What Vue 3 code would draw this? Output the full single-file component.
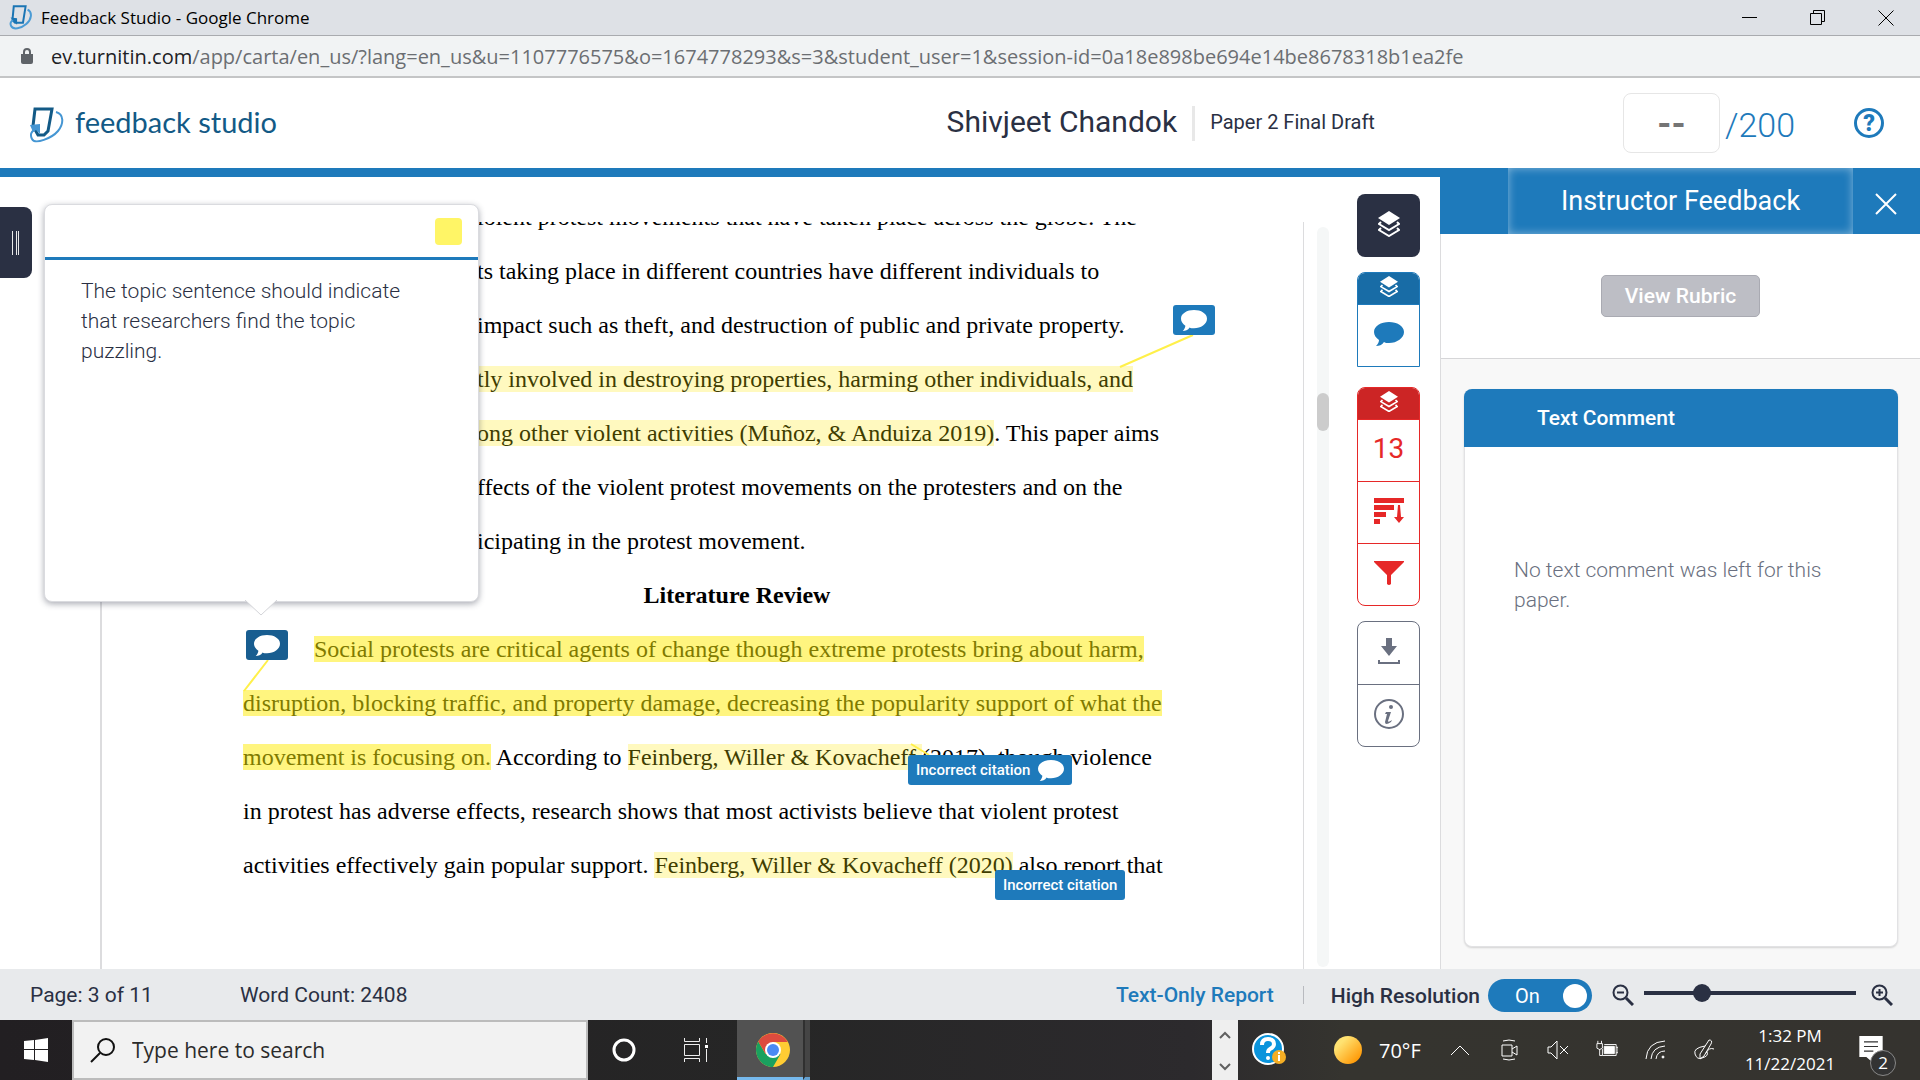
<script setup>
import { ref } from 'vue'

const zoom = ref(25)
const highRes = ref(true)

// Each line is a list of runs; tone selects the highlight strength.
const lines = [
  { tucked: true, runs: [{ t: 'iolent protest movements that have taken place across the globe. The' }] },
  { tucked: true, runs: [{ t: 'ts taking place in different countries have different individuals to' }] },
  { tucked: true, runs: [{ t: 'impact such as theft, and destruction of public and private property.' }] },
  { tucked: true, runs: [{ t: 'tly involved in destroying properties, harming other individuals, and', tone: 'soft' }] },
  { tucked: true, runs: [{ t: 'ong other violent activities (Muñoz, & Anduiza 2019)', tone: 'soft' }, { t: '. This paper aims' }] },
  { tucked: true, runs: [{ t: 'ffects of the violent protest movements on the protesters and on the' }] },
  { tucked: true, runs: [{ t: 'icipating in the protest movement.' }] },
  { heading: true, runs: [{ t: 'Literature Review' }] },
  { indent: true, runs: [{ t: 'Social protests are critical agents of change though extreme protests bring about harm,', tone: 'strong' }] },
  { runs: [{ t: 'disruption, blocking traffic, and property damage, decreasing the popularity support of what the', tone: 'strong' }] },
  { runs: [{ t: 'movement is focusing on.', tone: 'strong' }, { t: ' According to ' }, { t: 'Feinberg, Willer & Kovacheff ', tone: 'soft' }, { t: '(2017), though violence' }] },
  { runs: [{ t: 'in protest has adverse effects, research shows that most activists believe that violent protest' }] },
  { runs: [{ t: 'activities effectively gain popular support. ' }, { t: 'Feinberg, Willer & Kovacheff (2020)', tone: 'soft' }, { t: ' also report that' }] },
]
</script>

<template>
  <div class="screen">
    <div class="titlebar">
      <svg class="tab-logo" viewBox="0 0 34 38" aria-hidden="true">
        <path d="M6 2h18l-4 25H8L4 23z" fill="none" stroke="#1b75b4" stroke-width="3" />
        <path d="M27 7c8 4 6 15-2 22S5 38 2 32s2-9 7-11" fill="none" stroke="#4a9bd5" stroke-width="3" />
        <path d="M1 19l10 1v10z" fill="#1b75b4" />
      </svg>
      <span class="window-title">Feedback Studio - Google Chrome</span>
      <div class="window-buttons">
        <button aria-label="Minimize"><svg viewBox="0 0 16 16"><path d="M0 7.500h15" /></svg></button>
        <button aria-label="Restore"><svg viewBox="0 0 16 16"><path d="M.5 3.500h11v11H.5zM3.500 3V.5h11v11H12" /></svg></button>
        <button aria-label="Close window"><svg viewBox="0 0 16 16"><path d="M.5.5l15 15M15.500.5l-15 15" /></svg></button>
      </div>
    </div>

    <div class="urlbar">
      <svg class="lock" viewBox="0 0 12 16" aria-hidden="true">
        <path d="M0 6h12v8a2 2 0 0 1-2 2H2a2 2 0 0 1-2-2z" fill="#5f6368" />
        <path d="M3 7V4a3 3 0 0 1 6 0v3" fill="none" stroke="#5f6368" stroke-width="2" />
      </svg>
      <span class="url"><b>ev.turnitin.com</b>/app/carta/en_us/?lang=en_us&amp;u=1107776575&amp;o=1674778293&amp;s=3&amp;student_user=1&amp;session-id=0a18e898be694e14be8678318b1ea2fe</span>
    </div>

    <header class="header">
      <div class="brand">
        <svg viewBox="0 0 34 38" aria-hidden="true">
          <path d="M5 3h17l-4 22-4 4H8l-5-9z" fill="none" stroke="#135a86" stroke-width="3" />
          <path d="M26 6c8 2 8 12 2 19S5 39 2 33s1-8 4-11" fill="none" stroke="#4596d3" stroke-width="2" />
          <path d="M0 19l10-1v10L6 24l-3 2z" fill="#4596d3" />
        </svg>
        <span>feedback studio</span>
      </div>
      <div class="paper-info">
        <h1>Shivjeet Chandok</h1>
        <span class="paper-title">Paper 2 Final Draft</span>
      </div>
      <div class="grade">
        <input aria-label="Grade" type="text" placeholder="--" />
        <span>/200</span>
      </div>
      <button class="help" aria-label="Help">?</button>
    </header>

    <main class="main">
      <section class="viewer">
        <button class="drawer-toggle" aria-label="Open page list">
          <svg viewBox="0 0 8 24"><path d="M.5 0v24M4.500 0v24M6.500 0v24" stroke="#e8e8e8" /></svg>
        </button>
        <div class="page">
          <article class="text">
            <p
              v-for="(line, i) in lines"
              :key="i"
              :class="{ tucked: line.tucked, heading: line.heading, indent: line.indent }"
            ><template v-for="(run, j) in line.runs" :key="j"><mark v-if="run.tone" :class="run.tone">{{ run.t }}</mark><template v-else>{{ run.t }}</template></template></p>
          </article>
          <svg class="connectors" viewBox="0 0 1202 747" aria-hidden="true">
            <path d="M1091 113L1018 145M166 438L142 469M809 522L827 533" />
          </svg>
          <button class="marker m1" aria-label="Comment"><svg viewBox="0 0 30 24"><use href="#bubble" /></svg></button>
          <button class="marker m2" aria-label="Open comment"><svg viewBox="0 0 30 24"><use href="#bubble" /></svg></button>
          <button class="marker m3">Incorrect citation<svg viewBox="0 0 30 24"><use href="#bubble" /></svg></button>
          <button class="marker m4">Incorrect citation</button>
        </div>
        <div class="scrollbar"><div class="thumb"></div></div>
        <aside class="popover">
          <div class="popover-head"><button class="swatch" aria-label="Highlight colour"></button></div>
          <p>The topic sentence should indicate that researchers find the topic puzzling.</p>
          <svg class="arrow" viewBox="0 0 32 16"><path d="M0 0L16 15L32 0" fill="#fff" stroke="#d3d4d8" /></svg>
        </aside>
      </section>

      <nav class="tools">
        <button class="all" aria-label="All layers"><svg viewBox="0 0 22 26"><use href="#layers" /></svg></button>
        <div class="group blue">
          <button class="cap" aria-label="Instructor layer"><svg viewBox="0 0 22 26"><use href="#layers" /></svg></button>
          <button aria-label="Instructor feedback"><svg class="wide" viewBox="0 0 30 24"><use href="#bubble" /></svg></button>
        </div>
        <div class="group red">
          <button class="cap" aria-label="Similarity layer"><svg viewBox="0 0 22 26"><use href="#layers" /></svg></button>
          <button class="score">13</button>
          <button aria-label="All sources">
            <svg class="wide" viewBox="0 0 30 26"><path fill="currentColor" d="M0 0h30v5H0zM0 7h20v5H0zM0 14h12v5H0zM0 21h6v5H0zM24 7h2l1 12h3l-5 6-5-6h3z" /></svg>
          </button>
          <button aria-label="Filters">
            <svg class="wide" viewBox="0 0 30 24"><path fill="currentColor" d="M0 0h30v1L17 14v9q-2 2-4 0v-9L0 1z" /></svg>
          </button>
        </div>
        <div class="group gray">
          <button aria-label="Download">
            <svg class="wide" viewBox="0 0 30 26"><path fill="currentColor" d="M12 0h6v8h5l-8 10-8-10h5z" /><path d="M5 22v3h20v-3" fill="none" stroke="currentColor" stroke-width="2" /></svg>
          </button>
          <button aria-label="Submission information">
            <svg class="wide" viewBox="0 0 30 30"><circle cx="15" cy="15" r="14" fill="none" stroke="currentColor" stroke-width="2" /><circle cx="17" cy="8" r="2" fill="currentColor" /><path d="M12 13h5l-3 9q0 2 4-1l-1 2q-6 4-6 0l2-8h-2z" fill="currentColor" /></svg>
          </button>
        </div>
      </nav>

      <aside class="panel">
        <div class="panel-head">
          <h2>Instructor Feedback</h2>
          <button aria-label="Close panel"><svg viewBox="0 0 22 22"><path d="M1 1l20 20M21 1L1 21" stroke="#fff" stroke-width="2" /></svg></button>
        </div>
        <div class="rubric"><button>View Rubric</button></div>
        <div class="panel-body">
          <section class="card">
            <h3>Text Comment</h3>
            <p>No text comment was left for this paper.</p>
          </section>
        </div>
      </aside>
    </main>

    <footer class="footer">
      <span class="page-no">Page: 3 of 11</span>
      <span class="words">Word Count: 2408</span>
      <a href="#report">Text-Only Report</a>
      <span class="rule"></span>
      <label class="resolution">High Resolution<input v-model="highRes" type="checkbox" /><span class="switch">On</span></label>
      <button aria-label="Zoom out"><svg viewBox="0 0 22 22"><use href="#lens" /><path d="M5 8.500h7" /></svg></button>
      <input v-model="zoom" class="zoom" type="range" min="0" max="100" aria-label="Zoom" />
      <button aria-label="Zoom in"><svg viewBox="0 0 22 22"><use href="#lens" /><path d="M5 8.500h7M8.500 5v7" /></svg></button>
    </footer>

    <div class="taskbar">
      <button class="start" aria-label="Start">
        <svg viewBox="0 0 24 24"><path fill="#fff" d="M0 3l10-1v9H0zM11 2l13-2v11H11zM0 12h10v10L0 21zM11 12h13v12l-13-2z" /></svg>
      </button>
      <label class="search">
        <svg viewBox="0 0 25 25"><circle cx="16" cy="9" r="8" /><path d="M10 15L1 24" /></svg>
        <input type="text" placeholder="Type here to search" aria-label="Search" />
      </label>
      <button class="task" aria-label="Cortana"><svg viewBox="0 0 24 24"><circle cx="12" cy="12" r="10" fill="none" stroke="#fff" stroke-width="3" /></svg></button>
      <button class="task" aria-label="Task view">
        <svg viewBox="0 0 24 24" fill="none" stroke="#eee"><path d="M.5 0v3.500h15V0M.5 6.500h15v11H.5zM.5 24v-3.500h15V24M22.500 0v5M22.500 11v13" /><path d="M21 7h3v3h-3z" fill="#fff" stroke="none" /></svg>
      </button>
      <button class="task active" aria-label="Google Chrome">
        <svg class="chrome" viewBox="0 0 34 34">
          <circle cx="17" cy="17" r="17" fill="#fc3" />
          <path d="M2.300 8.500A17 17 0 0 0 17 34l7.400-12.700L17 17 9.600 21z" fill="#1aa15f" />
          <path d="M2.300 8.500A17 17 0 0 1 31.700 9H17L9.600 21z" fill="#dd4b3e" />
          <circle cx="17" cy="17" r="8" fill="#fff" />
          <circle cx="17" cy="17" r="6" fill="#4a8af4" />
        </svg>
      </button>
      <span class="stack"></span>
      <div class="spinner">
        <button aria-label="Scroll up"><svg viewBox="0 0 12 8"><path d="M1 7l5-5 5 5" /></svg></button>
        <button aria-label="Scroll down"><svg viewBox="0 0 12 8"><path d="M1 1l5 5 5-5" /></svg></button>
      </div>
      <div class="tray">
        <svg class="assist" viewBox="0 0 34 34">
          <circle cx="16" cy="16" r="15" fill="#0a94dc" stroke="#fff" stroke-width="2" />
          <path d="M10 12q0-6 6-6t6 5q0 3-4 5-2 1-2 4" fill="none" stroke="#fff" stroke-width="4" />
          <circle cx="16" cy="25" r="2" fill="#fff" />
          <circle cx="27" cy="24" r="7" fill="#f5ae24" /><path d="M26 22h2v6h-2zM26 19h2v2h-2z" fill="#fff" />
        </svg>
        <span class="sun"></span>
        <span class="temp">70°F</span>
        <svg class="glyph" viewBox="0 0 22 22"><path d="M2 16l9-9 9 9" /></svg>
        <svg class="glyph" viewBox="0 0 22 22"><path d="M4 6h10v11H4zM14 10l5-3v9l-5-3M5 2q6-2 12 0M5 20q6 2 12 0" /></svg>
        <svg class="glyph" viewBox="0 0 22 22"><path d="M1 8h3l6-6v18l-6-6H1zM13 7l8 8M21 7l-8 8" /></svg>
        <svg class="glyph" viewBox="0 0 24 22"><path d="M1 4h6v5q-3 3-6 0zM2 1v3M6 1v3M4 10v7h3M9 5h13v12H7v-7M22 8h2v6h-2" /><path d="M9 7h11v8H9z" fill="#fff" /></svg>
        <svg class="glyph" viewBox="0 0 22 22"><path d="M1 20Q2 3 20 2M6 20Q7 8 20 7M11 20q1-8 9-8" /><circle cx="18" cy="18" r="1" fill="#fff" /></svg>
        <svg class="glyph" viewBox="0 0 22 22"><path d="M15 1q4 0 2 4L10 17l-4 3 0-5zM11 7Q-1 9 1 15t7 4q7-2 5-6M12 14q3-6 8-4" /></svg>
        <div class="clock"><span>1:32 PM</span><span>11/22/2021</span></div>
        <div class="notice">
          <svg viewBox="0 0 20 24"><path d="M0 0h20v18h-7v6l-7-6H0z" fill="#fff" /><path d="M4 5h12M4 9h12M4 13h8" stroke="#333" /></svg>
          <span>2</span>
        </div>
      </div>
    </div>

    <svg class="defs" aria-hidden="true">
      <defs>
        <g id="bubble"><path fill="currentColor" d="M15 0c8 0 15 4 15 10s-7 11-15 11c-2 0-4 0-5-1-2 3-5 4-8 4 2-2 3-4 3-6-3-2-5-5-5-8C0 4 7 0 15 0z" /></g>
        <g id="layers"><path fill="currentColor" d="M11 0l11 7-11 7L0 7z" /><path fill="none" stroke="currentColor" stroke-width="2" d="M3 11l-2 2 10 6 10-6-2-2M3 17l-2 2 10 6 10-6-2-2" /></g>
        <g id="lens"><circle cx="8.500" cy="8.500" r="7" /><path d="M14 14l7 7" stroke-width="3" /></g>
      </defs>
    </svg>
  </div>
</template>

<style>
body {
  margin: 0;
}
</style>

<style scoped>
.screen {
  display: flex;
  flex-direction: column;
  min-height: 100vh;
  overflow: hidden;
  background: #fff;
  color: #2a3043;
  font-family: Roboto, "Liberation Sans", sans-serif;
  font-size: 21px;
}
.screen * {
  box-sizing: border-box;
}
button {
  display: flex;
  align-items: center;
  justify-content: center;
  padding: 0;
  border: 0;
  background: none;
  color: inherit;
  font: inherit;
}
h1, h2, h3, p {
  margin: 0;
  font-weight: 400;
}
.defs {
  position: absolute;
  width: 0;
  height: 0;
}

.titlebar {
  display: flex;
  align-items: center;
  height: 36px;
  padding-left: 9px;
  border-bottom: 1px solid #a9abaf;
  background: #dee1e6;
  color: #000;
  font-family: "Open Sans", "Noto Sans", sans-serif;
  font-size: 17px;
}
.tab-logo {
  width: 24px;
  height: 25px;
  margin-right: 8px;
}
.window-buttons {
  display: flex;
  margin-left: auto;
}
.window-buttons button {
  width: 68px;
  height: 32px;
}
.window-buttons svg {
  width: 16px;
  height: 16px;
  fill: none;
  stroke: #000;
}
.urlbar {
  display: flex;
  align-items: center;
  gap: 18px;
  height: 42px;
  padding-left: 21px;
  border-bottom: 2px solid #c4c5c6;
  background: #f1f3f4;
  color: #6b6e72;
  font-family: "Open Sans", "Noto Sans", sans-serif;
  font-size: 20px;
  white-space: nowrap;
}
.urlbar b {
  color: #202124;
  font-weight: 400;
}
.lock {
  width: 12px;
  height: 16px;
}

.header {
  display: flex;
  align-items: center;
  height: 99px;
  padding: 0 36px 0 30px;
  border-bottom: 9px solid #1e7abb;
}
.brand {
  display: flex;
  align-items: center;
  gap: 11px;
  color: #135a86;
  font-family: Lato, sans-serif;
  font-size: 29px;
}
.brand span {
  padding-bottom: 4px;
}
.brand svg {
  width: 34px;
  height: 38px;
  margin-top: 4px;
}
.paper-info {
  display: flex;
  flex: 1;
  align-items: center;
  justify-content: flex-end;
}
.paper-info h1 {
  padding: 0 15px 4px 0;
  border-right: 3px solid #e8e8e8;
  font-size: 30px;
  line-height: 31px;
}
.paper-title {
  padding: 0 0 2px 15px;
  font-size: 20px;
}
.grade {
  display: flex;
  align-items: center;
  gap: 5px;
  margin-left: 248px;
  color: #1e7abb;
  font-size: 34px;
  font-weight: 300;
}
.grade span {
  padding-top: 4px;
}
.grade input {
  width: 97px;
  height: 60px;
  padding: 2px 0 0;
  border: 1px solid #e6e6e6;
  border-radius: 8px;
  font: 700 36px Roboto, sans-serif;
  text-align: center;
}
.grade input::placeholder {
  color: #757575;
}
.help {
  width: 30px;
  height: 30px;
  margin-left: 59px;
  border: 3px solid #1e7abb;
  border-radius: 50%;
  color: #1e7abb;
  font-size: 23px;
  font-weight: 900;
}

.main {
  display: flex;
  flex: 1;
}
.viewer {
  position: relative;
  display: flex;
  flex: 1;
  padding: 45px 0 0 100px;
}
.drawer-toggle {
  position: absolute;
  top: 30px;
  left: 0;
  width: 32px;
  height: 71px;
  border-radius: 0 8px 8px 0;
  background: #2a3043;
}
.drawer-toggle svg {
  width: 8px;
  height: 24px;
}
.page {
  position: relative;
  flex: 1;
  overflow: hidden;
  border: solid #dcdcde;
  border-width: 0 1px 0 2px;
}
.text {
  margin-top: -32px;
  padding: 0 72px 0 141px;
  color: #000;
  font-family: "Liberation Serif", serif;
  font-size: 24px;
  line-height: 54px;
  white-space: pre;
}
.tucked {
  padding-left: 234px;
}
.indent {
  padding-left: 71px;
}
.heading {
  font-weight: 700;
  text-align: center;
}
mark.soft {
  background: #fff9bf;
  color: #403d00;
}
mark.strong {
  background: #fff57f;
  color: #807a00;
}
.connectors {
  position: absolute;
  top: 0;
  left: 0;
  width: 1202px;
  height: 747px;
  fill: none;
  stroke: #fff04a;
  stroke-width: 2;
}
.marker {
  position: absolute;
  gap: 8px;
  height: 30px;
  padding: 0 8px;
  border-radius: 3px;
  background: #1e7abb;
  color: #fff;
  font-size: 15px;
  font-weight: 500;
}
.marker svg {
  width: 26px;
  height: 21px;
}
.m1 {
  top: 83px;
  left: 1071px;
}
.m2 {
  top: 408px;
  left: 144px;
  background: #185d90;
}
.m3 {
  top: 533px;
  left: 806px;
}
.m4 {
  top: 648px;
  left: 893px;
}
.scrollbar {
  width: 12px;
  margin: 5px 28px 2px 13px;
  padding-top: 166px;
  border-radius: 6px;
  background: #f5f7f7;
}
.thumb {
  height: 38px;
  border-radius: 6px;
  background: #ccc;
}
.popover {
  position: absolute;
  top: 27px;
  left: 44px;
  width: 435px;
  height: 398px;
  border: 1px solid #dadbdf;
  border-radius: 8px;
  background: #fff;
  box-shadow: 0 2px 6px rgba(42, 48, 67, 0.4);
}
.popover-head {
  display: flex;
  align-items: center;
  justify-content: flex-end;
  height: 55px;
  padding: 0 16px;
  border-bottom: 3px solid #1e7abb;
}
.swatch {
  width: 27px;
  height: 27px;
  border-radius: 4px;
  background: #fff566;
}
.popover p {
  padding: 16px 60px 0 36px;
  font-weight: 300;
  line-height: 30px;
}
.arrow {
  position: absolute;
  top: 395px;
  left: 200px;
  width: 32px;
  height: 16px;
}

.tools {
  display: flex;
  flex-direction: column;
  width: 83px;
  padding-top: 17px;
}
.tools button {
  width: 63px;
  height: 62px;
  padding-bottom: 4px;
}
.tools svg {
  width: 22px;
}
.tools .wide {
  width: 30px;
}
.tools .all {
  height: 63px;
  border-radius: 8px;
  background: #2a3043;
  color: #fff;
}
.group {
  width: 63px;
  overflow: hidden;
  border: 1px solid;
  border-radius: 8px;
}
.group button {
  width: 61px;
}
.tools .cap {
  height: 31px;
  color: #fff;
}
.tools .cap svg {
  width: 18px;
}
.group button + button {
  border-top: 1px solid;
}
.blue {
  margin: 15px 0 20px;
  border-radius: 8px 8px 0 0;
  color: #1e7abb;
}
.blue .cap {
  background: #186ca6;
}
.red {
  margin-bottom: 15px;
  color: #e62828;
}
.red .cap {
  background: #cc2525;
}
.tools .score {
  font-size: 28px;
}
.gray {
  color: #6a7080;
}

.panel {
  display: flex;
  flex-direction: column;
  width: 480px;
  margin-top: -9px;
  border-left: 1px solid #dcdcde;
}
.panel-head {
  display: flex;
  height: 66px;
  margin-left: -1px;
  padding-left: 68px;
  background: #1e7abb;
  color: #fff;
}
.panel-head h2 {
  flex: 1;
  box-shadow: inset 0 0 10px rgba(255, 255, 255, 0.45);
  font-size: 27px;
  line-height: 66px;
  text-align: center;
}
.panel-head button {
  width: 67px;
  padding: 6px 2px 0 0;
}
.panel-head svg {
  width: 22px;
  height: 22px;
}
.rubric {
  display: flex;
  justify-content: center;
  align-items: center;
  height: 125px;
  border-bottom: 1px solid #d6d6d8;
}
.rubric button {
  width: 159px;
  height: 42px;
  border: 1px solid #a9aab2;
  border-radius: 5px;
  background: #bdbec5;
  color: #fff;
  font-weight: 500;
}
.panel-body {
  display: flex;
  flex: 1;
  padding: 30px 22px 22px 23px;
  background: #f8f8f8;
}
.card {
  flex: 1;
  border: 1px solid #e2e2e4;
  border-top: 0;
  border-radius: 8px;
  background: #fff;
  box-shadow: 0 1px 2px rgba(0, 0, 0, 0.15);
}
.card h3 {
  margin: 0 -1px;
  padding-left: 73px;
  border-radius: 8px 8px 0 0;
  background: #1e7abb;
  color: #fff;
  font-size: 21px;
  font-weight: 500;
  line-height: 58px;
}
.card p {
  padding: 108px 60px 0 49px;
  color: #6a7080;
  font-weight: 300;
  line-height: 30px;
}

.footer {
  display: flex;
  align-items: center;
  height: 51px;
  padding: 0 27px 0 30px;
  background: #e8eaec;
}
.page-no {
  width: 210px;
}
.footer a {
  margin-left: auto;
  color: #1e7abb;
  font-weight: 500;
  text-decoration: none;
}
.rule {
  width: 1px;
  height: 18px;
  margin: 0 27px 0 29px;
  background: #b8babf;
}
.resolution {
  display: flex;
  align-items: center;
  margin: 2px 20px 0 0;
  font-weight: 500;
}
.resolution input {
  position: absolute;
  opacity: 0;
}
.switch {
  display: flex;
  align-items: center;
  justify-content: space-between;
  width: 104px;
  height: 33px;
  margin-left: 8px;
  padding: 0 5px 0 27px;
  border-radius: 17px;
  background: #1e7abb;
  color: #fff;
  font-size: 20px;
  font-weight: 400;
}
.switch::after {
  width: 24px;
  height: 24px;
  border-radius: 50%;
  background: #fff;
  content: "";
}
.footer svg {
  width: 22px;
  height: 22px;
  fill: none;
  stroke: #2a3043;
  stroke-width: 2;
}
.zoom {
  width: 212px;
  height: 18px;
  margin: 0 15px 4px 10px;
  appearance: none;
  background: linear-gradient(#2a3043, #2a3043) center / 100% 4px no-repeat;
}
.zoom::-webkit-slider-thumb {
  width: 18px;
  height: 18px;
  appearance: none;
  border-radius: 50%;
  background: #2a3043;
}

.taskbar {
  display: flex;
  height: 60px;
  background: linear-gradient(90deg, #221f22, #262626 40%, #2c2a2d 62%, #35342f 70%, #35332f);
  color: #fff;
  font-family: "Open Sans", "Noto Sans", sans-serif;
}
.start {
  width: 72px;
}
.start svg {
  width: 24px;
  height: 24px;
}
.search {
  display: flex;
  align-items: center;
  gap: 15px;
  width: 516px;
  padding-left: 16px;
  border: 2px solid #bcbcbc;
  background: #f2f2f2;
}
.search svg {
  width: 25px;
  height: 25px;
  fill: none;
  stroke: #111;
  stroke-width: 2;
}
.search input {
  flex: 1;
  border: 0;
  outline: 0;
  background: none;
  font: inherit;
}
.search input::placeholder {
  color: #2b2b2b;
}
.task {
  width: 72px;
}
.task svg {
  width: 24px;
  height: 24px;
}
.active {
  margin-left: 5px;
  padding: 3px 0 0 5px;
  border-bottom: 3px solid #76b9ed;
  background: #525252;
}
.task.active {
  width: 66px;
}
.task .chrome {
  width: 34px;
  height: 34px;
}
.stack {
  width: 7px;
  border-bottom: 3px solid #64a0cf;
  border-left: 2px solid #303030;
  background: #454545;
}
.spinner {
  display: flex;
  flex-direction: column;
  justify-content: space-between;
  align-items: center;
  width: 26px;
  margin-left: auto;
  padding: 11px 0 9px;
  background: #efefef;
}
.spinner svg {
  width: 12px;
  height: 8px;
  fill: none;
  stroke: #606060;
  stroke-width: 2;
}
.tray {
  display: flex;
  align-items: center;
  width: 682px;
  padding-left: 14px;
  font-size: 20px;
}
.assist {
  width: 34px;
  height: 34px;
}
.sun {
  width: 28px;
  height: 28px;
  margin: 0 17px 0 48px;
  border-radius: 50%;
  background: linear-gradient(135deg, #ffe271 25%, #ff9a08 85%);
}
.temp {
  width: 70px;
}
.glyph {
  width: 22px;
  height: 22px;
  margin-right: 27px;
  fill: none;
  stroke: #fff;
}
.clock {
  display: flex;
  flex-direction: column;
  align-items: center;
  width: 94px;
  margin-right: 22px;
  font-size: 17px;
  line-height: 28px;
}
.notice {
  position: relative;
  height: 28px;
}
.notice svg {
  width: 24px;
  height: 28px;
}
.notice span {
  position: absolute;
  top: 14px;
  left: 11px;
  width: 26px;
  height: 26px;
  border: 1px solid #888;
  border-radius: 50%;
  background: #333;
  font-size: 17px;
  line-height: 24px;
  text-align: center;
}
</style>
